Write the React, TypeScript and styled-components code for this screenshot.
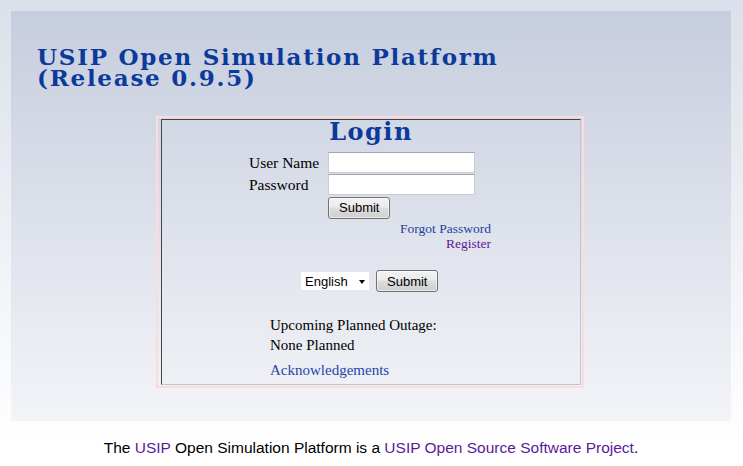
import styled, { createGlobalStyle } from "styled-components";

const GlobalStyle = createGlobalStyle`
  html, body {
    margin: 0;
    padding: 0;
  }
  body {
    min-height: 466px;
    background: linear-gradient(#dbe0ea, #ffffff 95%);
    font-family: "Liberation Serif", "Times New Roman", serif;
    color: #000;
  }
`;

function App() {
  return (
    <>
      <GlobalStyle />
      <Page>
        <Panel>
          <SiteTitle>
            USIP Open Simulation Platform
            <br />
            (Release 0.9.5)
          </SiteTitle>
          <LoginFrame>
            <LoginBox>
              <LoginHeading>Login</LoginHeading>
              <FormGrid>
                <FieldLabel>User Name</FieldLabel>
                <TextInput type="text" />
                <FieldLabel>Password</FieldLabel>
                <TextInput type="password" />
                <span />
                <div>
                  <Button>Submit</Button>
                </div>
              </FormGrid>
              <AccountLinks>
                <BlueLink href="#">Forgot Password</BlueLink>
                <VisitedLink href="#">Register</VisitedLink>
              </AccountLinks>
              <LanguageRow>
                <SelectWrap>
                  <LanguageSelect defaultValue="en">
                    <option value="en">English</option>
                  </LanguageSelect>
                </SelectWrap>
                <Button>Submit</Button>
              </LanguageRow>
              <Notice>
                Upcoming Planned Outage:
                <br />
                None Planned
              </Notice>
              <Acknowledge href="#">Acknowledgements</Acknowledge>
            </LoginBox>
          </LoginFrame>
        </Panel>
        <Footer>
          The <FooterLink href="#">USIP</FooterLink> Open Simulation Platform is
          a <FooterLink href="#">USIP Open Source Software Project</FooterLink>.
        </Footer>
      </Page>
    </>
  );
}

export default App;

const Page = styled.div`
  padding: 11px 12px 0 11px;
`;

const Panel = styled.div`
  background: linear-gradient(#c6cddd, #f3f4f8);
  padding: 35px 26px 33px;
  display: flex;
  flex-direction: column;
`;

const SiteTitle = styled.h1`
  margin: 0;
  font-family: "DejaVu Serif", Georgia, serif;
  font-size: 23px;
  line-height: 21px;
  font-weight: bold;
  letter-spacing: 1.75px;
  color: #0b3a9b;
`;

const LoginFrame = styled.div`
  align-self: flex-start;
  margin: 28px 0 0 119px;
  width: 420px;
  border: 2px solid #fcdadd;
  padding: 1px 1px 1px 3px;
`;

const LoginBox = styled.div`
  border: 1px solid;
  border-color: #444 #c2c4c9 #c2c4c9 #444;
  padding-bottom: 4px;
  display: flex;
  flex-direction: column;
`;

const LoginHeading = styled.h2`
  margin: 1px 0 0;
  text-align: center;
  font-family: "DejaVu Serif", Georgia, serif;
  font-size: 24px;
  line-height: 22px;
  font-weight: bold;
  letter-spacing: 1.5px;
  color: #0b3a9b;
`;

const FormGrid = styled.div`
  margin: 9px 0 0 87px;
  display: grid;
  grid-template-columns: 79px 147px;
  grid-auto-rows: 21px;
  row-gap: 1px;
  align-items: center;
  & > div {
    margin-top: 2px;
  }
`;

const FieldLabel = styled.span`
  font-size: 15.5px;
`;

const TextInput = styled.input`
  box-sizing: border-box;
  width: 147px;
  height: 21px;
  margin: 0;
  border: 1px solid #c8cbd2;
  border-top-color: #a3a6ad;
  background: #fff;
  padding: 1px 3px;
  outline: none;
`;

const Button = styled.button`
  box-sizing: border-box;
  height: 22px;
  padding: 0 10px;
  margin: 0;
  font-family: "Liberation Sans", Arial, sans-serif;
  font-size: 13px;
  color: #000;
  border: 1px solid #707070;
  border-radius: 3px;
  background: linear-gradient(#f2f2f2 0%, #ebebeb 45%, #dddddd 50%, #cfcfcf 100%);
  box-shadow: inset 0 0 0 1px rgba(255, 255, 255, 0.6);
`;

const AccountLinks = styled.div`
  margin-top: 4px;
  padding-right: 89px;
  display: flex;
  flex-direction: column;
  align-items: flex-end;
  font-size: 13.5px;
  line-height: 15px;
`;

const BlueLink = styled.a`
  color: #1f3f9c;
  text-decoration: none;
`;

const VisitedLink = styled.a`
  color: #5a1a99;
  text-decoration: none;
`;

const LanguageRow = styled.div`
  margin: 19px 0 0 138px;
  display: flex;
  align-items: center;
  gap: 6px;
`;

const SelectWrap = styled.div`
  position: relative;
  &::after {
    content: "";
    position: absolute;
    right: 5px;
    top: 9px;
    border-left: 3.5px solid transparent;
    border-right: 3.5px solid transparent;
    border-top: 4px solid #000;
    pointer-events: none;
  }
`;

const LanguageSelect = styled.select`
  appearance: none;
  box-sizing: border-box;
  width: 70px;
  height: 20px;
  margin: 0;
  padding: 0 0 0 4px;
  border: 1px solid #e4e6ec;
  background: #fff;
  font-family: "Liberation Sans", Arial, sans-serif;
  font-size: 13px;
  color: #000;
  outline: none;
`;

const Notice = styled.p`
  margin: 23px 0 0 108px;
  font-size: 15px;
  line-height: 20px;
`;

const Acknowledge = styled.a`
  margin: 5px 0 0 108px;
  font-size: 15px;
  line-height: 20px;
  color: #2444a8;
  text-decoration: none;
`;

const Footer = styled.p`
  margin: 18px 0 0;
  text-align: center;
  font-family: "Liberation Sans", Arial, sans-serif;
  font-size: 15.5px;
  line-height: 18px;
  color: #000;
`;

const FooterLink = styled.a`
  color: #5a1a99;
  text-decoration: none;
`;
